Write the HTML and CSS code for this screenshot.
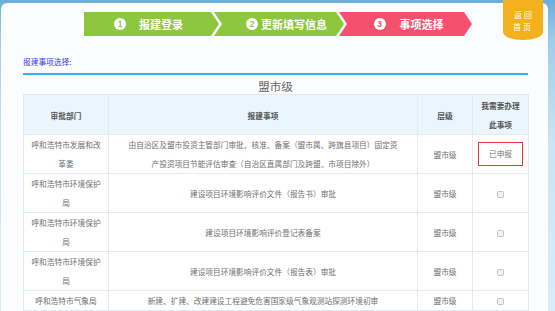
FILE: index.html
```html
<!DOCTYPE html>
<html lang="zh">
<head>
<meta charset="utf-8">
<title>报建事项选择</title>
<link rel="stylesheet" href="styles.css">
</head>
<body>
<div class="panel">
  <a class="home">返回<br>首页</a>
  <div class="steps">
    <div class="step s1"><span class="num">1</span><span class="txt t1">报建登录</span></div>
    <div class="step s2"><span class="num">2</span><span class="txt t2">更新填写信息</span></div>
    <div class="step s3"><span class="num">3</span><span class="txt t3">事项选择</span></div>
  </div>
  <div class="label">报建事项选择:</div>
  <div class="rule"></div>
  <div class="title">盟市级</div>
  <table class="grid">
    <colgroup><col class="c1"><col class="c2"><col class="c3"><col class="c4"></colgroup>
    <thead>
      <tr><th class="pad1">审批部门</th><th>报建事项</th><th>层级</th><th>我需要办理<br>此事项</th></tr>
    </thead>
    <tbody>
      <tr><td class="pad1">呼和浩特市发展和改革委</td><td class="pad2">由自治区及盟市投资主管部门审批、核准、备案（盟市属、跨旗县项目）固定资产投资项目节能评估审查（自治区直属部门及跨盟、市项目除外）</td><td>盟市级</td><td><span class="done">已申报</span></td></tr>
      <tr><td class="pad1">呼和浩特市环境保护局</td><td class="pad2">建设项目环境影响评价文件（报告书）审批</td><td>盟市级</td><td><span class="cb"></span></td></tr>
      <tr><td class="pad1">呼和浩特市环境保护局</td><td class="pad2">建设项目环境影响评价登记表备案</td><td>盟市级</td><td><span class="cb"></span></td></tr>
      <tr><td class="pad1">呼和浩特市环境保护局</td><td class="pad2">建设项目环境影响评价文件（报告表）审批</td><td>盟市级</td><td><span class="cb"></span></td></tr>
      <tr><td class="pad1">呼和浩特市气象局</td><td class="pad2">新建、扩建、改建建设工程避免危害国家级气象观测站探测环境初审</td><td>盟市级</td><td><span class="cb"></span></td></tr>
    </tbody>
  </table>
</div>
</body>
</html>
```
FILE: styles.css
```css
html, body {
  margin: 0;
  padding: 0;
}
body {
  width: 555px;
  height: 311px;
  overflow: hidden;
  background: linear-gradient(to bottom, #6aaed8 0, #9fcde9 40px, #c9e4f3 140px, #d9edf8 100%);
  font-family: "Noto Sans CJK SC", "Noto Sans", sans-serif;
}
.panel {
  position: relative;
  box-sizing: border-box;
  margin: 3px 0 0 1px;
  width: 547px;
  height: 308px;
  overflow: hidden;
  background: #fafcfe;
  border-radius: 6px 6px 0 0;
  padding: 9px 20px 0 22px;
}
.home {
  position: absolute;
  top: -3px;
  right: 5px;
  width: 40px;
  height: 40px;
  box-sizing: border-box;
  padding-top: 9px;
  background: #f2b11d;
  border-radius: 0 0 20px 20px / 0 0 8px 8px;
  color: #fff;
  font-size: 8px;
  line-height: 12px;
  letter-spacing: 2px;
  text-indent: 2px;
  text-align: center;
}
.panel { overflow: visible; }
.steps {
  display: flex;
  margin-left: 61px;
  height: 24px;
}
.step {
  height: 24px;
  display: flex;
  align-items: center;
  justify-content: center;
  color: #fff;
  font-size: 11px;
  font-weight: bold;
  box-sizing: border-box;
}
.s1 {
  width: 135px;
  background: #8dc63f;
  clip-path: polygon(0 0, calc(100% - 8px) 0, 100% 50%, calc(100% - 8px) 100%, 0 100%);
  padding-right: 6px;
}
.s2, .s3 {
  margin-left: -5px;
  clip-path: polygon(0 0, calc(100% - 8px) 0, 100% 50%, calc(100% - 8px) 100%, 0 100%, 8px 50%);
}
.s2 {
  width: 130px;
  background: #8dc63f;
  padding-left: 15px;
}
.s3 {
  width: 133px;
  background: #f5516f;
  padding-left: 6px;
}
.num {
  width: 12px;
  height: 12px;
  border-radius: 50%;
  background: #fff;
  font-size: 8.5px;
  line-height: 12px;
  text-align: center;
  font-family: "Liberation Sans", sans-serif;
  font-weight: bold;
}
.s1 .num, .s2 .num { color: #8dc63f; }
.s3 .num { color: #f5516f; }
.t1 { margin-left: 13px; }
.t2 { margin-left: 3px; }
.t3 { margin-left: 14px; }
.label {
  margin-top: 20px;
  font-size: 7.7px;
  line-height: 12px;
  color: #3d3df2;
}
.rule {
  margin-top: 5px;
  height: 2px;
  background: #2fb5f2;
}
.title {
  padding-top: 3px;
  font-size: 11.5px;
  line-height: 16px;
  text-align: center;
  color: #666;
}
.grid {
  width: 505px;
  table-layout: fixed;
  border-collapse: collapse;
  background: #fff;
  font-size: 7.7px;
  line-height: 19px;
  color: #707070;
}
.c1 { width: 85px; }
.c2 { width: 309px; }
.c3 { width: 55px; }
.c4 { width: 56px; }
.grid th, .grid td {
  border: 1px solid #e3ebf1;
  text-align: center;
  vertical-align: middle;
  padding: 0 4px;
}
.grid th {
  background: #eaf5fd;
  color: #555;
  font-weight: bold;
  padding-top: 1px;
}
.grid .pad1 { padding: 0 5px; }
.grid th.pad1 { padding-top: 1px; }
.grid .pad2 { padding: 0 18px; }
.done {
  display: inline-block;
  box-sizing: border-box;
  width: 45px;
  height: 24px;
  line-height: 22px;
  border: 1px solid #e5383c;
  color: #777;
  vertical-align: middle;
}
.cb {
  display: inline-block;
  box-sizing: border-box;
  width: 7px;
  height: 7px;
  border: 1px solid #c4c4c4;
  border-radius: 1.5px;
  background: #f2f2f2;
  vertical-align: middle;
}
```
